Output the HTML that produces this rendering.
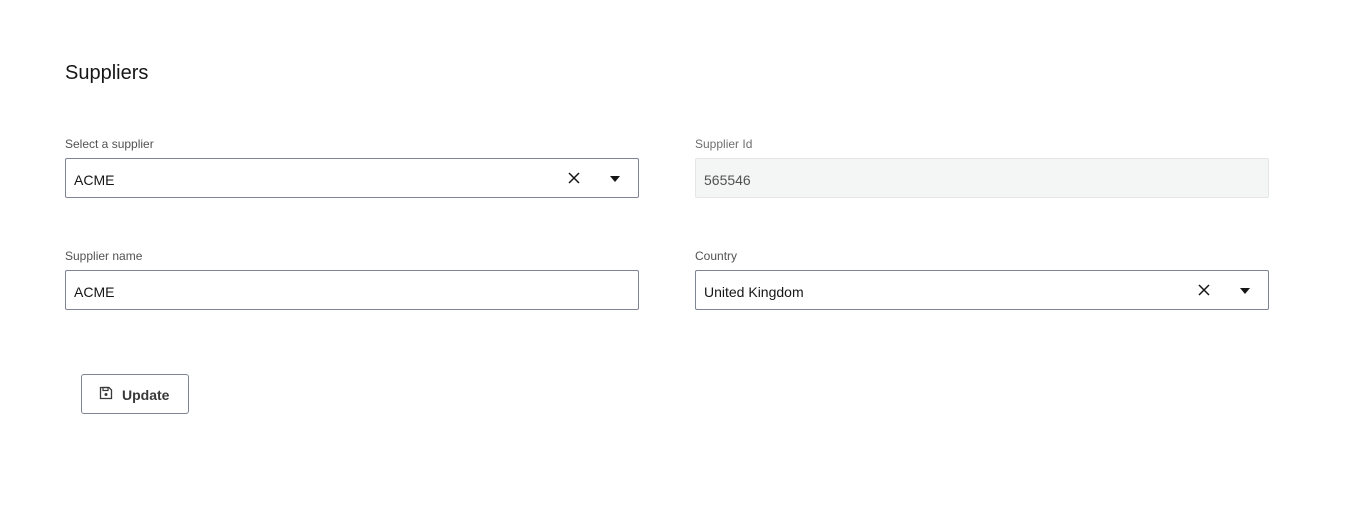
<!DOCTYPE html>
<html><head><style>
body{margin:0;width:1349px;height:515px;background:#fff;font-family:"Liberation Sans",sans-serif;color:#161616;position:relative;overflow:hidden}
.a{position:absolute}
.lbl{font-size:12px;color:#525252}
.box{border:1px solid #7d8593;border-radius:2px;box-sizing:border-box;height:40px;font-size:14px;line-height:42px;padding-left:8px}
</style></head><body>
<div class="a" style="left:65px;top:62px;font-size:20px">Suppliers</div>
<div class="a lbl" style="left:65px;top:137px">Select a supplier</div>
<div class="a box" style="left:65px;top:158px;width:574px">ACME
<svg class="a" style="left:502px;top:13px" width="12" height="12"><path d="M1 1L11 11M11 1L1 11" stroke="#161616" stroke-width="1.5"/></svg>
<svg class="a" style="left:543px;top:16px" width="12" height="8"><path d="M1 1L11 1L6 7Z" fill="#161616"/></svg></div>
<div class="a lbl" style="left:695px;top:137px;color:#6f6f6f">Supplier Id</div>
<div class="a box" style="left:695px;top:158px;width:574px;background:#f4f5f5;border-color:#e6e6e6;color:#525252">565546</div>
<div class="a lbl" style="left:65px;top:249px">Supplier name</div>
<div class="a box" style="left:65px;top:270px;width:574px">ACME</div>
<div class="a lbl" style="left:695px;top:249px">Country</div>
<div class="a box" style="left:695px;top:270px;width:574px">United Kingdom
<svg class="a" style="left:502px;top:13px" width="12" height="12"><path d="M1 1L11 11M11 1L1 11" stroke="#161616" stroke-width="1.5"/></svg>
<svg class="a" style="left:543px;top:16px" width="12" height="8"><path d="M1 1L11 1L6 7Z" fill="#161616"/></svg></div>
<div class="a" style="left:81px;top:374px;width:108px;height:40px;border:1px solid #7d8593;border-radius:3px;box-sizing:border-box;font-size:14px;color:#393939;line-height:38px;font-weight:bold">
<svg class="a" style="left:17px;top:11px" width="14" height="14"><path d="M1.5 1.5H10L12.5 4V12.5H1.5Z" fill="none" stroke="#393939" stroke-width="1.3"/><rect x="4" y="1.5" width="5" height="3" fill="none" stroke="#393939" stroke-width="1.2"/><circle cx="7" cy="8.5" r="1.5" fill="#393939"/></svg>
<span class="a" style="left:40px;top:1px">Update</span></div>
</body></html>
